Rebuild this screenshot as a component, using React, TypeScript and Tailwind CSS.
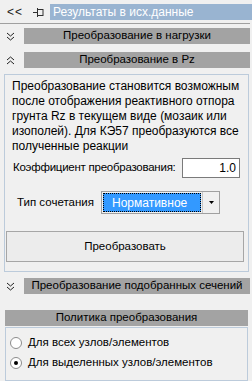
import React from 'react'

const FONT = "font-['Liberation_Sans',Arial,sans-serif]"

function ChevronDouble({ up = false }: { up?: boolean }) {
  return (
    <svg width="9" height="9" viewBox="0 0 9 9" aria-hidden="true" className={up ? 'rotate-180' : ''}>
      <polyline points="1,1 4.5,4 8,1" fill="none" stroke="#202020" strokeWidth="1" />
      <polyline points="1,5 4.5,8 8,5" fill="none" stroke="#202020" strokeWidth="1" />
    </svg>
  )
}

function PinIcon() {
  return (
    <svg width="11" height="9" viewBox="0 0 11 9" aria-hidden="true">
      <line x1="0" y1="4.5" x2="4" y2="4.5" stroke="#303030" strokeWidth="1" />
      <line x1="4.5" y1="0" x2="4.5" y2="9" stroke="#303030" strokeWidth="1" />
      <rect x="4.5" y="1.5" width="5.5" height="6" fill="none" stroke="#303030" strokeWidth="1" />
    </svg>
  )
}

function SectionBar({ title, up = false }: { title: string; up?: boolean }) {
  return (
    <div className="flex items-center h-[16px]">
      <div className="w-[24px] flex items-center justify-center pr-[4px]">
        <ChevronDouble up={up} />
      </div>
      <div className="flex-1 mr-[2px] h-full bg-[#a3a3a3] flex items-center justify-center text-[11.5px] text-black leading-none whitespace-nowrap">
        {title}
      </div>
    </div>
  )
}

function Radio({ checked, label }: { checked?: boolean; label: string }) {
  return (
    <div className="flex items-center h-[20px]">
      <span className="w-[12px] h-[12px] rounded-full border border-[#8c8c8c] bg-white flex items-center justify-center ml-[4px]">
        {checked && <span className="w-[4px] h-[4px] rounded-full bg-black" />}
      </span>
      <span className="ml-[6px] text-[11.5px] text-black">{label}</span>
    </div>
  )
}

export default function App() {
  return (
    <div className={`w-[252px] h-[381px] bg-[#f0f0f0] overflow-hidden ${FONT}`}>
      {/* заголовок */}
      <div className="flex items-center h-[16px] mt-[4px]">
        <span className="w-[50px] flex items-center text-[12px] text-[#202020] leading-none">
          <span className="ml-[7px] tracking-[1px]">&lt;&lt;</span>
          <span className="ml-[10px] flex items-center"><PinIcon /></span>
        </span>
        <div className="flex-1 h-full bg-[#99b4d1] text-white text-[12px] leading-[16px] pl-[3px]">
          Результаты в исх.данные
        </div>
      </div>
      <div className="mt-[3px] h-px w-[250px] bg-[#a0a0a0]" />

      <div className="mt-[4px]">
        <SectionBar title="Преобразование в нагрузки" />
      </div>
      <div className="mt-[8px]">
        <SectionBar title="Преобразование в Pz" up />
      </div>

      {/* панель */}
      <div className="mt-[6px] ml-[4px] w-[245px] h-[198px] border border-[#bccbdb] text-[12px] text-black">
        <p className="pl-[7px] pt-[4px] pr-[4px] leading-[15px]">
          Преобразование становится возможным после отображения реактивного отпора грунта Rz в текущем виде (мозаик или изополей). Для КЭ57 преобразуются все полученные реакции
        </p>
        <div className="flex items-center mt-[4px] h-[20px]">
          <span className="ml-[8px] w-[169px] whitespace-nowrap text-[11.5px] tracking-[-0.25px]">Коэффициент преобразования:</span>
          <div className="w-[58px] h-full bg-white border border-[#7a7a7a] flex items-center justify-end pr-[3px]">
            1.0
          </div>
        </div>
        <div className="flex items-center mt-[13px] h-[23px]">
          <span className="ml-[12px] w-[84px] whitespace-nowrap text-[11.5px]">Тип сочетания</span>
          <div className="w-[119px] h-full border border-[#a0a0a0] bg-[#f0f0f0] flex">
            <div className="flex-1 m-[1px] bg-[#3399ff] border border-dotted border-black text-white flex items-center pl-[8px]">
              Нормативное
            </div>
            <div className="w-[17px] border-l border-[#c8c8c8] flex items-center justify-center">
              <svg width="5" height="3" viewBox="0 0 5 3" aria-hidden="true">
                <polygon points="0,0 5,0 2.5,3" fill="#000" />
              </svg>
            </div>
          </div>
        </div>
        <button className="mt-[17px] ml-[1px] w-[238px] h-[31px] border border-[#a6a6a6] bg-[#ececec] text-[11.5px] text-black">
          Преобразовать
        </button>
      </div>

      <div className="mt-[6px]">
        <SectionBar title="Преобразование подобранных сечений" />
      </div>

      {/* политика */}
      <div className="mt-[16px] ml-[5px] w-[243px]">
        <div className="h-[16px] bg-[#a3a3a3] flex items-center justify-center text-[11.5px] text-black">
          Политика преобразования
        </div>
        <div className="mt-[1px] h-[54px] border border-[#bccbdb] pt-[5px]">
          <Radio label="Для всех узлов/элементов" />
          <Radio checked label="Для выделенных узлов/элементов" />
        </div>
      </div>
    </div>
  )
}
